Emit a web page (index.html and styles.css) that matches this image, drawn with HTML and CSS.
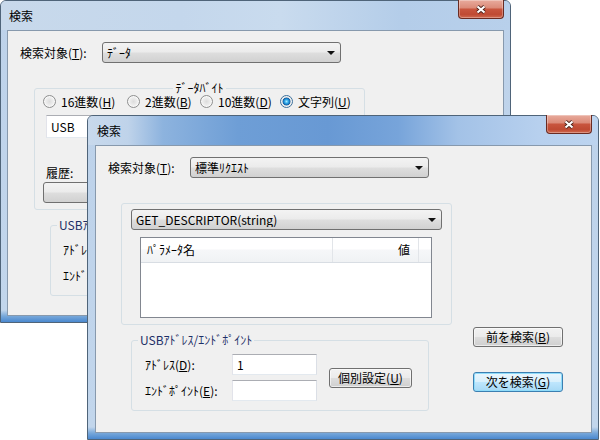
FILE: index.html
```html
<!DOCTYPE html>
<html lang="ja">
<head>
<meta charset="utf-8">
<title>検索</title>
<link rel="stylesheet" href="styles.css">
</head>
<body>
<div class="desk">
  <section class="win win-back">
    <header class="titlebar">
      <span class="title">検索</span>
      <span class="close"><svg width="14" height="11" viewBox="0 0 14 11"><path d="M3.5 2.5 L10.5 8.5 M10.5 2.5 L3.5 8.5" stroke="#4a1f18" stroke-width="3.8" fill="none"/><path d="M3.5 2.5 L10.5 8.5 M10.5 2.5 L3.5 8.5" stroke="#fff" stroke-width="2.2" fill="none"/></svg></span>
    </header>
    <div class="client">
      <div class="main">
        <div class="row1">
          <span class="lbl">検索対象(<u>T</u>):</span>
          <div class="combo c-target"><span class="val">ﾃﾞｰﾀ</span><i class="arrow"></i></div>
        </div>
        <fieldset class="group g1-back">
          <legend class="lg-center">ﾃﾞｰﾀﾊﾞｲﾄ</legend>
          <div class="gbody-back">
            <div class="radios">
              <span class="radio rw1"><i></i>16進数(<u>H</u>)</span>
              <span class="radio rw2"><i></i>2進数(<u>B</u>)</span>
              <span class="radio rw3"><i></i>10進数(<u>D</u>)</span>
              <span class="radio on"><i></i>文字列(<u>U</u>)</span>
            </div>
            <div class="input usb">USB</div>
            <div class="hist-lbl">履歴:</div>
            <div class="combo hist"><span class="val"></span><i class="arrow"></i></div>
          </div>
        </fieldset>
        <fieldset class="group g2 g2-back">
          <legend>USBｱﾄﾞﾚｽ/ｴﾝﾄﾞﾎﾟｲﾝﾄ</legend>
          <div class="g2body g2body-back">
            <div class="addr-grid">
              <span>ｱﾄﾞﾚｽ(<u>D</u>):</span><div class="input">1</div>
              <span>ｴﾝﾄﾞﾎﾟｲﾝﾄ(<u>E</u>):</span><div class="input"></div>
            </div>
            <div class="btn b-indiv">個別設定(<u>U</u>)</div>
          </div>
        </fieldset>
      </div>
      <div class="side">
        <div class="btn b-side">前を検索(<u>B</u>)</div>
        <div class="btn b-side">次を検索(<u>G</u>)</div>
      </div>
    </div>
  </section>

  <section class="win win-front">
    <header class="titlebar">
      <span class="title">検索</span>
      <span class="close"><svg width="14" height="11" viewBox="0 0 14 11"><path d="M3.5 2.5 L10.5 8.5 M10.5 2.5 L3.5 8.5" stroke="#4a1f18" stroke-width="3.8" fill="none"/><path d="M3.5 2.5 L10.5 8.5 M10.5 2.5 L3.5 8.5" stroke="#fff" stroke-width="2.2" fill="none"/></svg></span>
    </header>
    <div class="client">
      <div class="main">
        <div class="row1">
          <span class="lbl">検索対象(<u>T</u>):</span>
          <div class="combo c-target"><span class="val">標準ﾘｸｴｽﾄ</span><i class="arrow"></i></div>
        </div>
        <div class="group g1-front">
          <div class="combo"><span class="val">GET_DESCRIPTOR(string)</span><i class="arrow"></i></div>
          <div class="list">
            <div class="lhead">
              <span class="h1">ﾊﾟﾗﾒｰﾀ名</span>
              <span class="h2">値</span>
              <span class="h3"></span>
            </div>
          </div>
        </div>
        <fieldset class="group g2 g2-front">
          <legend>USBｱﾄﾞﾚｽ/ｴﾝﾄﾞﾎﾟｲﾝﾄ</legend>
          <div class="g2body">
            <div class="addr-grid">
              <span>ｱﾄﾞﾚｽ(<u>D</u>):</span><div class="input">1</div>
              <span>ｴﾝﾄﾞﾎﾟｲﾝﾄ(<u>E</u>):</span><div class="input"></div>
            </div>
            <div class="btn b-indiv">個別設定(<u>U</u>)</div>
          </div>
        </fieldset>
      </div>
      <div class="side">
        <div class="btn b-side">前を検索(<u>B</u>)</div>
        <div class="btn b-side default">次を検索(<u>G</u>)</div>
      </div>
    </div>
  </section>
</div>
</body>
</html>
```

FILE: styles.css
```css
* { box-sizing: border-box; }
html, body { margin: 0; padding: 0; }
body {
  width: 600px; height: 440px; overflow: hidden; background: #fff;
  font-family: "Noto Sans CJK JP", "Noto Sans", sans-serif;
  font-size: 12px; line-height: 14px; color: #000;
}
u { text-decoration: underline; text-underline-offset: 1px; }
.desk { position: relative; width: 600px; height: 440px; }

.win {
  position: absolute; display: flex; flex-direction: column;
  border: 1px solid #4f6479; border-radius: 6px 6px 0 0;
  background: linear-gradient(to bottom, #bdd2ea 0, #c2d6ec calc(100% - 12px), #78a8da calc(100% - 6px), #4a88cf 100%);
}
.win-back { left: 0; top: 0; width: 511px; height: 323px; padding: 0 6px 6px 6px; }
.win-front { left: 87px; top: 115px; width: 512px; height: 325px; padding: 0 6px 6px 7px; }

.titlebar {
  height: 29px; flex: none; display: flex; align-items: center;
  margin: 0 -6px 0 -6px; padding: 0 6px 0 8px;
  border-radius: 5px 5px 0 0;
}
.win-front .titlebar { margin-left: -7px; padding-left: 9px;
  background: linear-gradient(90deg, #c8d9ec 0, #bfd3ea 40px, #8db3de 75px, #6e9ed6 150px, #6899d4 240px, #77a4da 310px, #a3c2e7 370px, #b7d0ee 450px, #bdd4ef 512px);
}
.win-back .titlebar {
  background: linear-gradient(90deg, #c8d9eb 0, #c4d7ec 180px, #c9dbee 280px, #b4cde9 400px, #b8d0eb 511px);
}
.title { flex: 1; }
.close {
  align-self: flex-start; margin-top: -1px; width: 46px; height: 19px;
  display: flex; align-items: center; justify-content: center;
  border: 1px solid #6a2b22; border-top: none; border-radius: 0 0 4px 4px;
  background: linear-gradient(to bottom, #e8ab9d 0%, #dc8c7a 42%, #c8553e 52%, #bf4a33 80%, #d06a50 100%);
  box-shadow: inset 0 0 0 1px rgba(255,255,255,0.3);
}
.win-front .close { height: 19px; }

.client {
  flex: 1; display: flex; background: #f0f0f0;
  border: 1px solid #8799ad;
  padding: 11px 28px 0 12px;
}
.main { width: 345px; flex: none; }
.side { margin-left: auto; padding-top: 170px; display: flex; flex-direction: column; gap: 25px; }

.row1 { display: flex; align-items: center; height: 21px; }
.lbl { width: 82px; flex: none; white-space: nowrap; }
.c-target { width: 239px; }

.combo {
  height: 21px; display: flex; align-items: center;
  border: 1px solid #707070; border-radius: 3px;
  background: linear-gradient(#f3f3f3 0%, #ebebeb 48%, #dedede 52%, #d1d1d1 100%);
  padding: 0 5px 0 4px;
}
.combo .val { flex: 1; white-space: nowrap; overflow: hidden; }
.arrow {
  width: 0; height: 0; flex: none;
  border-left: 4px solid transparent; border-right: 4px solid transparent;
  border-top: 4px solid #111;
}

.group { border: 1px solid #d5dfe5; border-radius: 3px; margin: 0; padding: 0; min-width: 0; }
fieldset.group { min-inline-size: 0; }
legend { padding: 0 2px; margin-left: 6px; line-height: 16px; color: #1c2f66; }
legend.lg-center { margin-left: auto; margin-right: auto; color: #000; }

.g1-back { margin: 17px 0 0 14px; width: 331px; height: 130px; }
.gbody-back { padding: 0 0 0 8px; }
.radios { display: flex; height: 13px; margin-top: -1px; align-items: center; }
.radio { display: flex; align-items: center; white-space: nowrap; flex: none; }
.rw1 { width: 84px; } .rw2 { width: 73px; } .rw3 { width: 80px; }
.radio i {
  width: 13px; height: 13px; border-radius: 50%; margin-right: 5px; flex: none;
  border: 1px solid #8e8f8f;
  background: radial-gradient(circle, #dcdcdc 0, #eeeeee 4px, #f8f8f8 5px, #e9e9e9 6px);
}
.radio.on i {
  border-color: #3b6f9b;
  background: radial-gradient(circle, #a6ecff 0, #2aa3e6 2px, #1761a6 3.6px, #e6e6e6 4.3px, #f7f7f7 5.5px);
}
.input {
  height: 21px; background: #fff; padding: 0 4px;
  border: 1px solid; border-color: #abadb3 #dbdfe6 #e3e9ef #e2e3ea;
  display: flex; align-items: center; white-space: nowrap;
}
.usb { width: 300px; height: 23px; margin: 7px 0 0 3px; }
.hist-lbl { margin: 28px 0 0 3px; }
.hist { margin-top: 2px; width: 310px; }

.g1-front { margin: 25px 0 0 13px; width: 331px; height: 122px; padding: 5px 9px 0 9px; }
.list { margin: 7px 0 0 9px; width: 292px; height: 81px; border: 1px solid #828790; background: #fff; }
.lhead {
  display: grid; grid-template-columns: 192px 86px 1fr; height: 25px;
  background: linear-gradient(#ffffff 0%, #ffffff 45%, #f6f7f9 50%, #f0f2f4 100%);
  border-bottom: 1px solid #d8dde3;
}
.lhead span { display: flex; align-items: center; border-right: 1px solid #e2e5e9; white-space: nowrap; }
.lhead .h1 { padding-left: 6px; }
.lhead .h2 { justify-content: flex-end; padding-right: 8px; }
.lhead .h3 { border-right: none; }

.g2 { margin-top: 7px; width: 298px; height: 79px; }
.g2-front { margin-left: 23px; }
.g2-back { margin-left: 30px; }
.g2body { display: flex; align-items: center; padding: 6px 0 0 13px; }
.g2body-back { padding-left: 12px; }
.addr-grid { display: grid; grid-template-columns: 87px 85px; grid-auto-rows: 21px; row-gap: 5px; align-items: center; }
.addr-grid span { white-space: nowrap; }

.btn {
  height: 20px; display: flex; align-items: center; justify-content: center;
  border: 1px solid #707070; border-radius: 3px; white-space: nowrap;
  background: linear-gradient(#f2f2f2 0%, #ebebeb 48%, #dddddd 52%, #cfcfcf 100%);
  box-shadow: inset 0 0 0 1px rgba(255,255,255,0.6);
}
.b-indiv { width: 83px; margin-left: 12px; }
.b-side { width: 90px; }
.btn.default {
  border-color: #3c7fb1;
  background: linear-gradient(#eaf6fd 0%, #d9f0fc 48%, #bee6fd 52%, #a7d9f5 100%);
  box-shadow: inset 0 0 0 1px #8fdcfa;
}
```
